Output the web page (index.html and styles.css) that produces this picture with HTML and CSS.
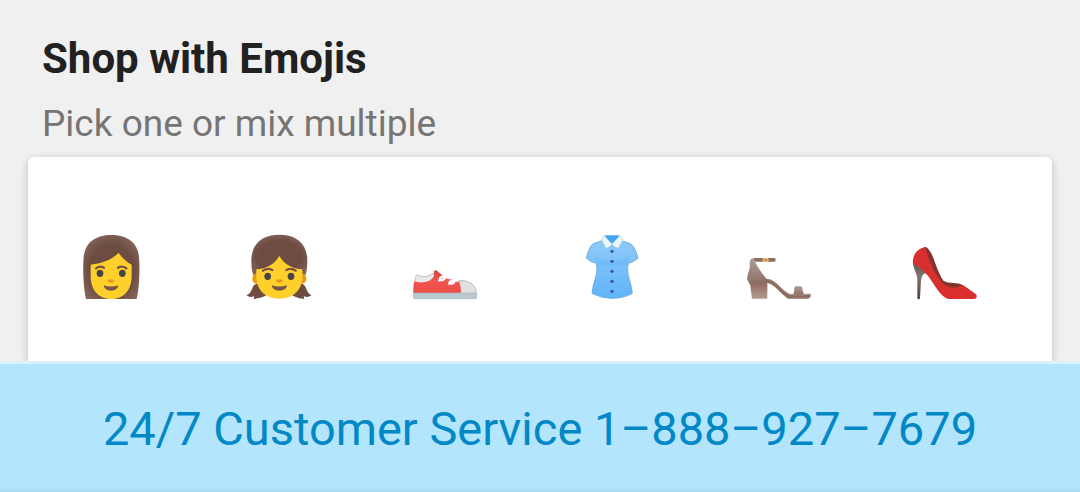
FILE: index.html
```html
<!DOCTYPE html>
<html lang="en">
<head>
<meta charset="utf-8">
<meta name="viewport" content="width=device-width, initial-scale=1">
<title>Shop with Emojis</title>
<link rel="stylesheet" href="styles.css">
</head>
<body>
<main class="shop">
  <header class="heading">
    <h1 class="title">Shop with Emojis</h1>
    <p class="subtitle">Pick one or mix multiple</p>
  </header>
  <div class="card">
    <button class="emoji" type="button" aria-label="Woman">
      <svg viewBox="0 0 252 252" aria-hidden="true">
        <defs><radialGradient id="hair" cx=".5" cy=".55" r=".6"><stop offset=".65" stop-color="#6d4c41"/><stop offset="1" stop-color="#82655b"/></radialGradient></defs>
        <path fill="url(#hair)" d="M48 222C40 188 38 132 41 95C46 51 78 30 124 30C170 30 202 51 207 95C210 132 208 188 200 222Z"/>
        <path fill="#ffd02c" d="M62 119C94 115 125 106 146 83C154 97 168 110 185 119V153C185 193 163 222 124 222C84 222 62 193 62 153Z"/>
        <path fill="none" stroke="#7a5145" stroke-width="7" stroke-linecap="round" d="M78 130Q90 121 102 128M144 128Q156 121 169 130"/>
        <ellipse cx="90" cy="145" rx="10" ry="11" fill="#454547"/><ellipse cx="157" cy="145" rx="10" ry="11" fill="#454547"/>
        <path fill="#e99a19" d="M113 165Q123 161 133 165Q131 174 123 174Q115 174 113 165Z"/>
        <path fill="#795548" d="M101 181Q123 188 145 181C143 192 135 197 123 197C111 197 103 192 101 181Z"/>
      </svg>
    </button>
    <button class="emoji" type="button" aria-label="Girl">
      <svg viewBox="0 0 252 252" aria-hidden="true">
        <path fill="#6d4c41" d="M60 176C50 178 48 184 45 192C42 201 36 208 29 211C36 217 45 217 52 213L50 222C72 220 88 214 98 202ZM193 176C203 178 205 184 208 192C211 201 217 208 223 211C216 217 207 217 200 213L202 222C181 220 166 214 156 202Z"/>
        <path fill="url(#hair)" d="M43 108C43 56 75 29 127 29C179 29 211 56 211 108C211 127 209 142 205 150H49C45 142 43 127 43 108Z"/>
        <ellipse cx="59" cy="161" rx="13" ry="15" fill="#e59c10"/><ellipse cx="195" cy="161" rx="13" ry="15" fill="#e59c10"/>
        <path fill="#ffd02c" d="M58 133C88 132 113 117 127 93C141 117 166 132 196 133V154C196 195 169 221 127 221C85 221 58 195 58 154Z"/>
        <path fill="none" stroke="#7a5145" stroke-width="7" stroke-linecap="round" d="M78 137Q91 127 106 135M148 135Q163 127 176 137"/>
        <ellipse cx="92" cy="154" rx="10" ry="11" fill="#454547"/><ellipse cx="162" cy="154" rx="10" ry="11" fill="#454547"/>
        <path fill="#e99a19" d="M116 165Q127 161 138 165Q136 173 127 173Q118 173 116 165Z"/>
        <path fill="#795548" d="M104 181Q127 188 150 181C148 192 140 197 127 197C114 197 106 192 104 181Z"/>
      </svg>
    </button>
    <button class="emoji" type="button" aria-label="Sneaker">
      <svg viewBox="0 0 252 252" aria-hidden="true">
        <defs><linearGradient id="shoe" x2="0" y2="1"><stop stop-color="#d7413c"/><stop offset=".45" stop-color="#f05550"/><stop offset="1" stop-color="#ed4d46"/></linearGradient></defs>
        <path fill="#e7e8e9" stroke="#bdbdbd" stroke-width="3" d="M36 174C36 160 38 151 43 150C58 158 76 156 90 144L105 172L88 183Z"/>
        <path fill="url(#shoe)" d="M31 204C31 187 31 178 34 169C52 175 82 174 93 154V139Q99 132 105 140L134 162L174 167V204Z"/>
        <path fill="#e0e0e0" d="M166 167C193 164 219 175 221 204H173Q176 184 166 167Z"/>
        <path fill="none" stroke="#bdbdbd" stroke-width="3" d="M168 168C192 164 216 175 220 200"/>
        <path fill="#b9c9d1" stroke="#a1b3bc" stroke-width="2" d="M31 204H221V217Q221 221 216 221H36Q31 221 31 217Z"/>
        <path fill="none" stroke="#fff" stroke-width="7" stroke-linecap="round" d="M109 166Q125 166 127 157Q113 150 109 166M139 176Q153 177 154 168M139 176Q139 163 164 167"/>
      </svg>
    </button>
    <button class="emoji" type="button" aria-label="Blouse">
      <svg viewBox="0 0 252 252" aria-hidden="true">
        <defs><linearGradient id="cloth" x2="0" y2="1"><stop stop-color="#91caf9"/><stop offset="1" stop-color="#5eb4fa"/></linearGradient></defs>
        <path fill="url(#cloth)" stroke="#70afdf" stroke-width="3" stroke-linejoin="round" d="M104 43C90 52 75 51 65 60C56 72 53 86 49 99Q61 112 79 115C83 132 80 149 75 163Q68 185 66 205Q93 220 126 220Q160 220 187 205Q184 182 178 163C173 147 171 132 175 115Q191 112 204 99C199 82 194 67 184 58C172 51 160 52 148 43Z"/>
        <path fill="#69b6f0" opacity=".55" d="M79 91Q83 108 107 108Q119 108 126 105Q134 108 146 108Q168 107 174 91V119Q126 126 79 119Z"/>
        <path fill="#42a5f5" d="M103 31H149L127 62Z"/>
        <path fill="#eef6fa" stroke="#c2dce7" stroke-width="3" stroke-linejoin="round" d="M104 31L94 42L108 69Q118 67 126 58L104 34ZM149 31L159 42L145 69Q134 67 126 58L148 34Z"/>
        <g fill="#3f51b5"><circle cx="126" cy="79" r="5"/><circle cx="126" cy="109" r="5"/><circle cx="126" cy="139" r="5"/><circle cx="126" cy="169" r="5"/><circle cx="126" cy="199" r="5"/></g>
      </svg>
    </button>
    <button class="emoji" type="button" aria-label="Sandal">
      <svg viewBox="0 0 252 252" aria-hidden="true">
        <defs><linearGradient id="heel" x2="0" y2="1"><stop stop-color="#92695f"/><stop offset="1" stop-color="#b39b91"/></linearGradient><linearGradient id="strap" x2="0" y2="1"><stop stop-color="#ad9d97"/><stop offset="1" stop-color="#8d6e63"/></linearGradient></defs>
        <path fill="#8d6e63" d="M50 99H112Q116 99 116 105Q116 110 112 110H50Z"/>
        <path fill="url(#strap)" d="M45 100Q37 104 38 116C40 139 29 145 31 164L40 180L91 164C76 147 61 125 53 108Q53 99 45 100Z"/>
        <path fill="url(#heel)" d="M39 174H91V221H45Z"/>
        <path fill="#8d6e63" d="M35 174Q36 164 49 167L92 162C118 165 134 196 158 208Q187 211 221 207V214Q220 221 212 221H153C130 206 112 177 91 174Z"/>
        <path fill="none" stroke="#ac948a" stroke-width="3" d="M94 163C119 168 135 199 158 208Q187 212 220 207"/>
        <path fill="url(#strap)" d="M168 207Q172 203 172 188Q173 184 178 184H190Q195 184 196 189Q197 203 202 207Q185 213 168 207Z"/>
        <rect x="79" y="101" width="14" height="8" rx="2" fill="#b8886d" stroke="#f6bd61" stroke-width="4"/>
      </svg>
    </button>
    <button class="emoji" type="button" aria-label="High-heeled shoe">
      <svg viewBox="0 0 252 252" aria-hidden="true">
        <defs><linearGradient id="spike" x2="0" y2="1"><stop stop-color="#62564f"/><stop offset=".35" stop-color="#81766f"/><stop offset="1" stop-color="#4e413b"/></linearGradient></defs>
        <path fill="url(#spike)" d="M30 115L50 115L70 144Q57 145 54 165L51 220Q50 223 47 223Q43 223 43 219V163C42 145 32 134 30 115Z"/>
        <path fill="#83322f" d="M64 67Q69 64 73 69C96 93 94 124 121 167C139 178 164 169 180 181L156 199H110L60 110Z"/>
        <path fill="#d9302f" d="M30 118C27 90 42 71 67 66C76 105 101 165 130 182C145 190 163 190 179 179L218 207Q222 210 221 216Q220 222 214 222H137C114 219 94 178 76 154C60 137 48 121 30 118Z"/>
      </svg>
    </button>
  </div>
</main>
<footer class="service"><a class="phone" href="tel:18889277679">24/7 Customer Service 1–888–927–7679</a></footer>
</body>
</html>
```
FILE: styles.css
```css
* { box-sizing: border-box; }

body {
  display: flex;
  flex-direction: column;
  min-height: 100vh;
  margin: 0;
  background: #f0f0f0;
  font-family: Roboto, "Liberation Sans", sans-serif;
}

.shop {
  display: flex;
  flex: 1;
  flex-direction: column;
  padding: 33px 28px 0;
}

.heading { padding: 0 14px; }

.title,
.subtitle {
  margin: 0;
  line-height: 52px;
}

.title {
  color: #212121;
  font-size: 42px;
  font-weight: 700;
}

.subtitle {
  margin-top: 13px;
  color: #757575;
  font-size: 37px;
}

.card {
  display: grid;
  flex: 1;
  grid-template-columns: repeat(6, 1fr);
  align-items: center;
  margin-top: 7px;
  padding: 60px 24px 44px 0;
  border-radius: 6px 6px 0 0;
  background: #fff;
  box-shadow: 0 3px 8px rgba(0, 0, 0, .24);
}

.emoji {
  width: 84px;
  margin-left: 42px;
  padding: 0;
  border: 0;
  background: none;
  cursor: pointer;
}

.emoji svg {
  display: block;
  width: 100%;
}

.service {
  position: relative;
  padding: 37px 16px 35px;
  border-top: 3px solid #d9f2fe;
  background: linear-gradient(to top, #a9daf2, #b3e5fc 6px);
  text-align: center;
}

.phone {
  color: #0288c7;
  font-size: 47px;
  line-height: 56px;
  text-decoration: none;
}
```
